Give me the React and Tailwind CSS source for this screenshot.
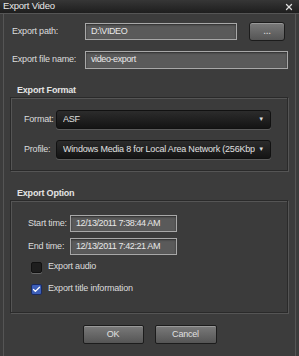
import { Check, X } from 'lucide-react';

const Field = ({ value, className = '' }) => (
  <div
    className={`h-[17px] shrink-0 flex items-center px-[5px] whitespace-nowrap overflow-hidden bg-[#5a5a5a] border border-[#a8a8a8] text-[#e8e8e8] tracking-[-0.4px] shadow-[inset_0_1px_2px_rgba(0,0,0,0.5)] ${className}`}
  >
    {value}
  </div>
);

const Select = ({ value }) => (
  <div className="h-[19px] w-[215px] shrink-0 flex items-center pl-[6px] pr-[6px] rounded-[3px] bg-gradient-to-b from-[#2c2c2c] to-[#141414] border border-[#111] shadow-[0_1px_0_#5a5a5a] text-[#e0e0e0]">
    <span className="flex-1 min-w-0 whitespace-nowrap overflow-hidden text-clip">{value}</span>
    <span className="text-[6px] ml-[3px] shrink-0 text-[#ddd]">▼</span>
  </div>
);

const Button = ({ children, className = '' }) => (
  <button
    className={`h-[19px] flex items-center justify-center border border-[#1c1c1c] rounded-[2px] bg-gradient-to-b from-[#7a7a7a] to-[#555] text-[#e0e0e0] shadow-[inset_0_1px_0_#999] ${className}`}
  >
    {children}
  </button>
);

const GroupBox = ({ title, children, className = '' }) => (
  <div className={className}>
    <div className="font-bold text-[#e4e4e4] pl-[7px] h-[14px] leading-[14px]">{title}</div>
    <div className="border border-[#2a2a2a] shadow-[1px_1px_0_#555,inset_1px_1px_0_#555] bg-[#3b3b3b]">
      {children}
    </div>
  </div>
);

const Label = ({ children, className = '' }) => (
  <span className={`shrink-0 whitespace-nowrap ${className}`}>{children}</span>
);

export default function App() {
  return (
    <div
      className="w-[299px] h-[356px] bg-[#3c3c3c] text-[9px] tracking-[-0.2px] text-[#dcdcdc] flex flex-col overflow-hidden"
      style={{ fontFamily: '"Liberation Sans", Arial, sans-serif' }}
    >
      <div className="h-[14px] shrink-0 flex items-center justify-between pl-[3px] pr-[5px] bg-gradient-to-b from-[#363636] to-[#1e1e1e] border-b border-[#555]">
        <span className="text-[#e8e8e8] text-[9.5px]">Export Video</span>
        <X size={10} strokeWidth={3} className="text-[#ddd]" />
      </div>

      <div className="flex-1 mx-[3px] border-l border-r border-[#555] flex flex-col">
        <div className="flex items-center mt-[8px] pl-[8px] h-[19px]">
          <Label className="w-[73px]">Export path:</Label>
          <Field value="D:\VIDEO" className="w-[152px]" />
          <Button className="w-[36px] ml-[12px] rounded-[3px]">
            <span className="text-[10px] leading-none -mt-[2px]">...</span>
          </Button>
        </div>
        <div className="flex items-center mt-[10px] pl-[8px]">
          <Label className="w-[73px]">Export file name:</Label>
          <Field value="video-export" className="w-[203px] h-[18px]" />
        </div>

        <GroupBox title="Export Format" className="mt-[14px] ml-[6px] w-[278px]">
          <div className="pt-[12px] pb-[11px] pl-[13px] flex flex-col gap-[11px]">
            <div className="flex items-center">
              <Label className="w-[32px]">Format:</Label>
              <Select value="ASF" />
            </div>
            <div className="flex items-center">
              <Label className="w-[32px]">Profile:</Label>
              <Select value="Windows Media 8 for Local Area Network (256Kbps)" />
            </div>
          </div>
        </GroupBox>

        <GroupBox title="Export Option" className="mt-[15px] ml-[6px] w-[278px]">
          <div className="pt-[14px] pb-[15px] pl-[17px] flex flex-col">
            <div className="flex items-center">
              <Label className="w-[42px]">Start time:</Label>
              <Field value="12/13/2011 7:38:44 AM" className="w-[107px]" />
            </div>
            <div className="flex items-center mt-[6px]">
              <Label className="w-[42px]">End time:</Label>
              <Field value="12/13/2011 7:42:21 AM" className="w-[107px]" />
            </div>
            <div className="flex items-center mt-[4px] pl-[3px] h-[16px]">
              <span className="w-[11px] h-[11px] rounded-[2px] bg-[#1e1e1e] border border-[#111] shadow-[0_1px_0_#666]" />
              <span className="ml-[6px]">Export audio</span>
            </div>
            <div className="flex items-center mt-[6px] pl-[3px] h-[16px]">
              <span className="w-[11px] h-[11px] rounded-[2px] bg-[#3d5fb8] border border-[#1a2a60] flex items-center justify-center">
                <Check size={9} strokeWidth={3.5} className="text-white" />
              </span>
              <span className="ml-[6px]">Export title information</span>
            </div>
          </div>
        </GroupBox>

        <div className="flex justify-center gap-[11px] mt-[12px]">
          <Button className="w-[61px]">OK</Button>
          <Button className="w-[62px]">Cancel</Button>
        </div>
      </div>
    </div>
  );
}
